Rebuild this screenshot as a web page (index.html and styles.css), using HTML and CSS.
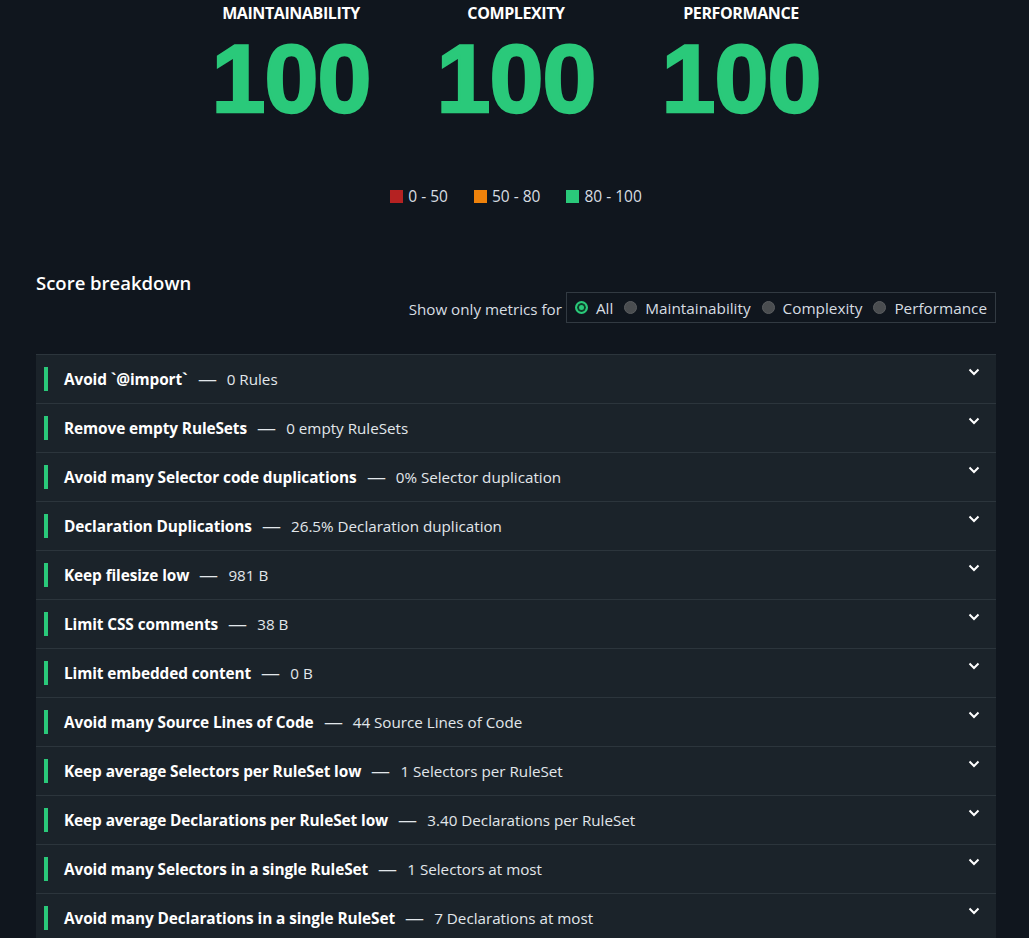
FILE: index.html
```html
<!DOCTYPE html>
<html lang="en">
<head>
<meta charset="utf-8">
<title>Score</title>
<link rel="stylesheet" href="styles.css">
</head>
<body>
<main class="page">
  <section class="scores">
    <div class="score">
      <h2 class="score-label">MAINTAINABILITY</h2>
      <div class="score-value">100</div>
    </div>
    <div class="score">
      <h2 class="score-label">COMPLEXITY</h2>
      <div class="score-value">100</div>
    </div>
    <div class="score">
      <h2 class="score-label">PERFORMANCE</h2>
      <div class="score-value">100</div>
    </div>
  </section>

  <ul class="legend">
    <li class="legend-item"><span class="swatch swatch-red"></span>0 - 50</li>
    <li class="legend-item"><span class="swatch swatch-orange"></span>50 - 80</li>
    <li class="legend-item"><span class="swatch swatch-green"></span>80 - 100</li>
  </ul>

  <section class="breakdown">
    <h3 class="breakdown-title">Score breakdown</h3>
    <div class="filter-row">
      <span class="filter-label">Show only metrics for</span>
      <div class="filter">
        <label class="radio"><span class="dot dot-on"></span>All</label>
        <label class="radio"><span class="dot"></span>Maintainability</label>
        <label class="radio"><span class="dot"></span>Complexity</label>
        <label class="radio"><span class="dot"></span>Performance</label>
      </div>
    </div>

    <ul class="metrics">
      <li class="metric"><span class="bar"></span><strong>Avoid `@import`</strong><span class="dash">—</span><span class="val">0 Rules</span><svg class="chev" viewBox="0 0 12 8"><path d="M1.5 1.5 6 6 10.5 1.5" /></svg></li>
      <li class="metric"><span class="bar"></span><strong>Remove empty RuleSets</strong><span class="dash">—</span><span class="val">0 empty RuleSets</span><svg class="chev" viewBox="0 0 12 8"><path d="M1.5 1.5 6 6 10.5 1.5" /></svg></li>
      <li class="metric"><span class="bar"></span><strong>Avoid many Selector code duplications</strong><span class="dash">—</span><span class="val">0% Selector duplication</span><svg class="chev" viewBox="0 0 12 8"><path d="M1.5 1.5 6 6 10.5 1.5" /></svg></li>
      <li class="metric"><span class="bar"></span><strong>Declaration Duplications</strong><span class="dash">—</span><span class="val">26.5% Declaration duplication</span><svg class="chev" viewBox="0 0 12 8"><path d="M1.5 1.5 6 6 10.5 1.5" /></svg></li>
      <li class="metric"><span class="bar"></span><strong>Keep filesize low</strong><span class="dash">—</span><span class="val">981 B</span><svg class="chev" viewBox="0 0 12 8"><path d="M1.5 1.5 6 6 10.5 1.5" /></svg></li>
      <li class="metric"><span class="bar"></span><strong>Limit CSS comments</strong><span class="dash">—</span><span class="val">38 B</span><svg class="chev" viewBox="0 0 12 8"><path d="M1.5 1.5 6 6 10.5 1.5" /></svg></li>
      <li class="metric"><span class="bar"></span><strong>Limit embedded content</strong><span class="dash">—</span><span class="val">0 B</span><svg class="chev" viewBox="0 0 12 8"><path d="M1.5 1.5 6 6 10.5 1.5" /></svg></li>
      <li class="metric"><span class="bar"></span><strong>Avoid many Source Lines of Code</strong><span class="dash">—</span><span class="val">44 Source Lines of Code</span><svg class="chev" viewBox="0 0 12 8"><path d="M1.5 1.5 6 6 10.5 1.5" /></svg></li>
      <li class="metric"><span class="bar"></span><strong>Keep average Selectors per RuleSet low</strong><span class="dash">—</span><span class="val">1 Selectors per RuleSet</span><svg class="chev" viewBox="0 0 12 8"><path d="M1.5 1.5 6 6 10.5 1.5" /></svg></li>
      <li class="metric"><span class="bar"></span><strong>Keep average Declarations per RuleSet low</strong><span class="dash">—</span><span class="val">3.40 Declarations per RuleSet</span><svg class="chev" viewBox="0 0 12 8"><path d="M1.5 1.5 6 6 10.5 1.5" /></svg></li>
      <li class="metric"><span class="bar"></span><strong>Avoid many Selectors in a single RuleSet</strong><span class="dash">—</span><span class="val">1 Selectors at most</span><svg class="chev" viewBox="0 0 12 8"><path d="M1.5 1.5 6 6 10.5 1.5" /></svg></li>
      <li class="metric"><span class="bar"></span><strong>Avoid many Declarations in a single RuleSet</strong><span class="dash">—</span><span class="val">7 Declarations at most</span><svg class="chev" viewBox="0 0 12 8"><path d="M1.5 1.5 6 6 10.5 1.5" /></svg></li>
    </ul>
  </section>
</main>
</body>
</html>
```

FILE: styles.css
```css
* { box-sizing: border-box; }

html, body {
  margin: 0;
  padding: 0;
  background: #10161e;
  color: #e8ecef;
  font-family: "Open Sans", "Noto Sans", sans-serif;
  overflow: hidden;
}

.page {
  padding: 0 33px 0 36px;
  height: 938px;
}

.scores {
  display: flex;
  justify-content: center;
  padding-top: 3px;
}

.score {
  width: 225px;
  display: flex;
  flex-direction: column;
  align-items: center;
}

.score-label {
  margin: 0;
  font-size: 16px;
  font-weight: 700;
  letter-spacing: -0.4px;
  color: #ffffff;
  line-height: 20px;
}

.score-value {
  font-family: "Liberation Sans", Arial, sans-serif;
  font-weight: 900;
  font-size: 97px;
  line-height: 100px;
  color: #2ac97a;
  letter-spacing: -1px;
  margin-top: 6px;
  -webkit-text-stroke: 2.5px #2ac97a;
}

.legend {
  list-style: none;
  margin: 57px 0 0;
  padding: 0;
  display: flex;
  justify-content: center;
  gap: 26px;
  font-size: 15.5px;
  color: #d7dde2;
}

.legend-item {
  display: flex;
  align-items: center;
  gap: 5px;
  line-height: 20px;
}

.swatch {
  width: 13px;
  height: 13px;
  display: inline-block;
}
.swatch-red { background: #b52222; }
.swatch-orange { background: #ef820b; }
.swatch-green { background: #2ac97a; }

.breakdown {
  margin-top: 65px;
}

.breakdown-title {
  margin: 0;
  font-size: 18.5px;
  font-weight: 600;
  color: #ffffff;
  line-height: 24px;
}

.filter-row {
  display: flex;
  justify-content: flex-end;
  align-items: center;
  gap: 4px;
  margin-top: -3px;
}

.filter-label {
  font-size: 15.2px;
  color: #d7dde2;
  padding-top: 3px;
}

.filter {
  display: flex;
  align-items: center;
  gap: 11px;
  border: 1px solid #323a42;
  height: 31px;
  padding: 0 8px 0 8px;
  font-size: 15.3px;
  color: #d7dde2;
}

.radio {
  display: flex;
  align-items: center;
  gap: 8px;
}

.dot {
  width: 13px;
  height: 13px;
  border-radius: 50%;
  background: #4a4d50;
  border: 1px solid #5a5d60;
  display: inline-block;
}

.dot-on {
  background: #2ac97a;
  border: 2px solid #2ac97a;
  box-shadow: inset 0 0 0 2px #0f3d2a;
}

.metrics {
  list-style: none;
  margin: 31px 0 0;
  padding: 0;
}

.metric {
  display: flex;
  align-items: center;
  height: 49px;
  background: #1b232a;
  border-top: 1px solid #2c353c;
  padding: 0 16px 0 8px;
  font-size: 15.2px;
  color: #e2e7eb;
}

.bar {
  width: 4px;
  height: 24px;
  background: #2ac97a;
  margin-right: 16px;
}

.metric strong {
  font-weight: 700;
  font-size: 15.4px;
  color: #ffffff;
  letter-spacing: -0.1px;
}

.dash {
  margin: 0 12px 0 12px;
  display: inline-block;
  transform: scaleX(1.25);
}

.val {
  flex: 1;
}

.chev {
  width: 12px;
  height: 8px;
  margin-top: -14px;
  fill: none;
  stroke: #ffffff;
  stroke-width: 2;
}
```
